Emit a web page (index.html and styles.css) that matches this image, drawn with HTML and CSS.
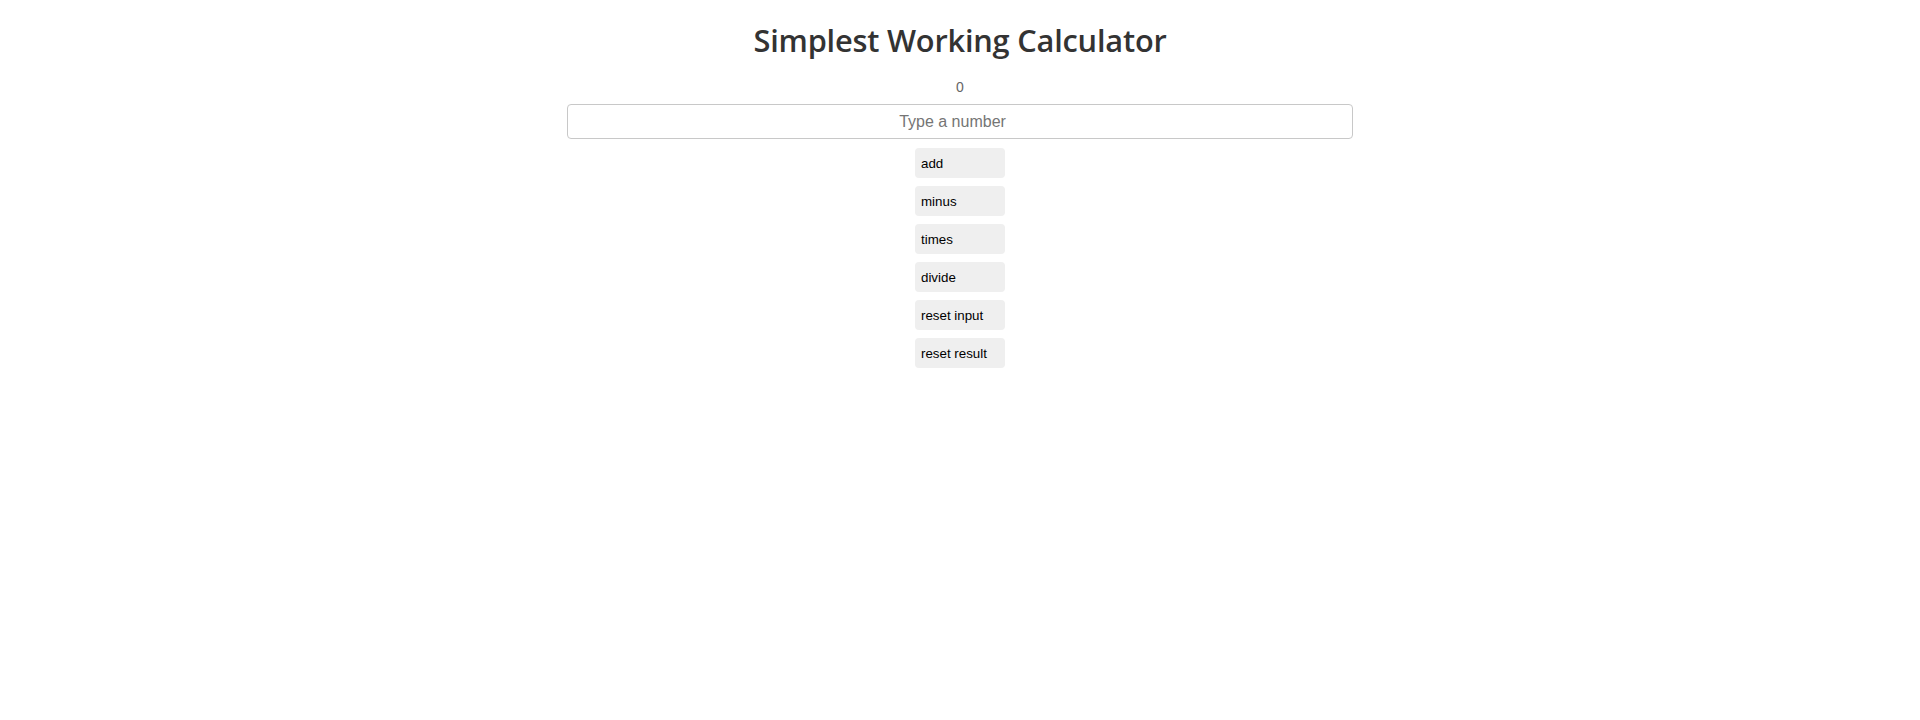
FILE: index.html
```html
<!DOCTYPE html>
<html>
<head>
<meta charset="utf-8">
<title>Simplest Working Calculator</title>
<link rel="stylesheet" href="styles.css">
</head>
<body>
<main class="app">
  <h1 class="title">Simplest Working Calculator</h1>
  <p class="result">0</p>
  <form class="calc">
    <input class="number" type="number" placeholder="Type a number">
    <div class="buttons">
      <button type="button" class="btn">add</button>
      <button type="button" class="btn">minus</button>
      <button type="button" class="btn">times</button>
      <button type="button" class="btn">divide</button>
      <button type="button" class="btn">reset input</button>
      <button type="button" class="btn">reset result</button>
    </div>
  </form>
</main>
</body>
</html>
```
FILE: styles.css
```css
html, body {
  margin: 0;
  padding: 0;
  background: #fff;
}
.app {
  display: flex;
  flex-direction: column;
  align-items: center;
  font-family: "Liberation Sans", Arial, sans-serif;
}
.title {
  margin: 18px 0 0;
  font-family: "Open Sans", "Noto Sans", sans-serif;
  font-weight: 600;
  font-size: 30.75px;
  line-height: 44px;
  color: #333;
  letter-spacing: -0.2px;
}
.result {
  margin: 16px 0 0;
  font-size: 14px;
  line-height: 18px;
  color: #666;
}
.calc {
  display: flex;
  flex-direction: column;
  align-items: center;
  margin-top: 8px;
}
.number {
  box-sizing: border-box;
  width: 786px;
  height: 35px;
  border: 1px solid #c8c8c8;
  border-radius: 4px;
  padding: 0 8px;
  text-align: center;
  font-family: "Liberation Sans", Arial, sans-serif;
  font-size: 16px;
  color: #333;
  outline: none;
}
.number::placeholder {
  color: #757575;
}
.buttons {
  display: flex;
  flex-direction: column;
  gap: 8px;
  margin-top: 9px;
}
.btn {
  box-sizing: border-box;
  width: 90px;
  height: 30px;
  padding: 0 6px;
  border: none;
  border-radius: 4px;
  background: #efefef;
  color: #000;
  text-align: left;
  font-family: "Liberation Sans", Arial, sans-serif;
  font-size: 13.33px;
  cursor: pointer;
}
```
